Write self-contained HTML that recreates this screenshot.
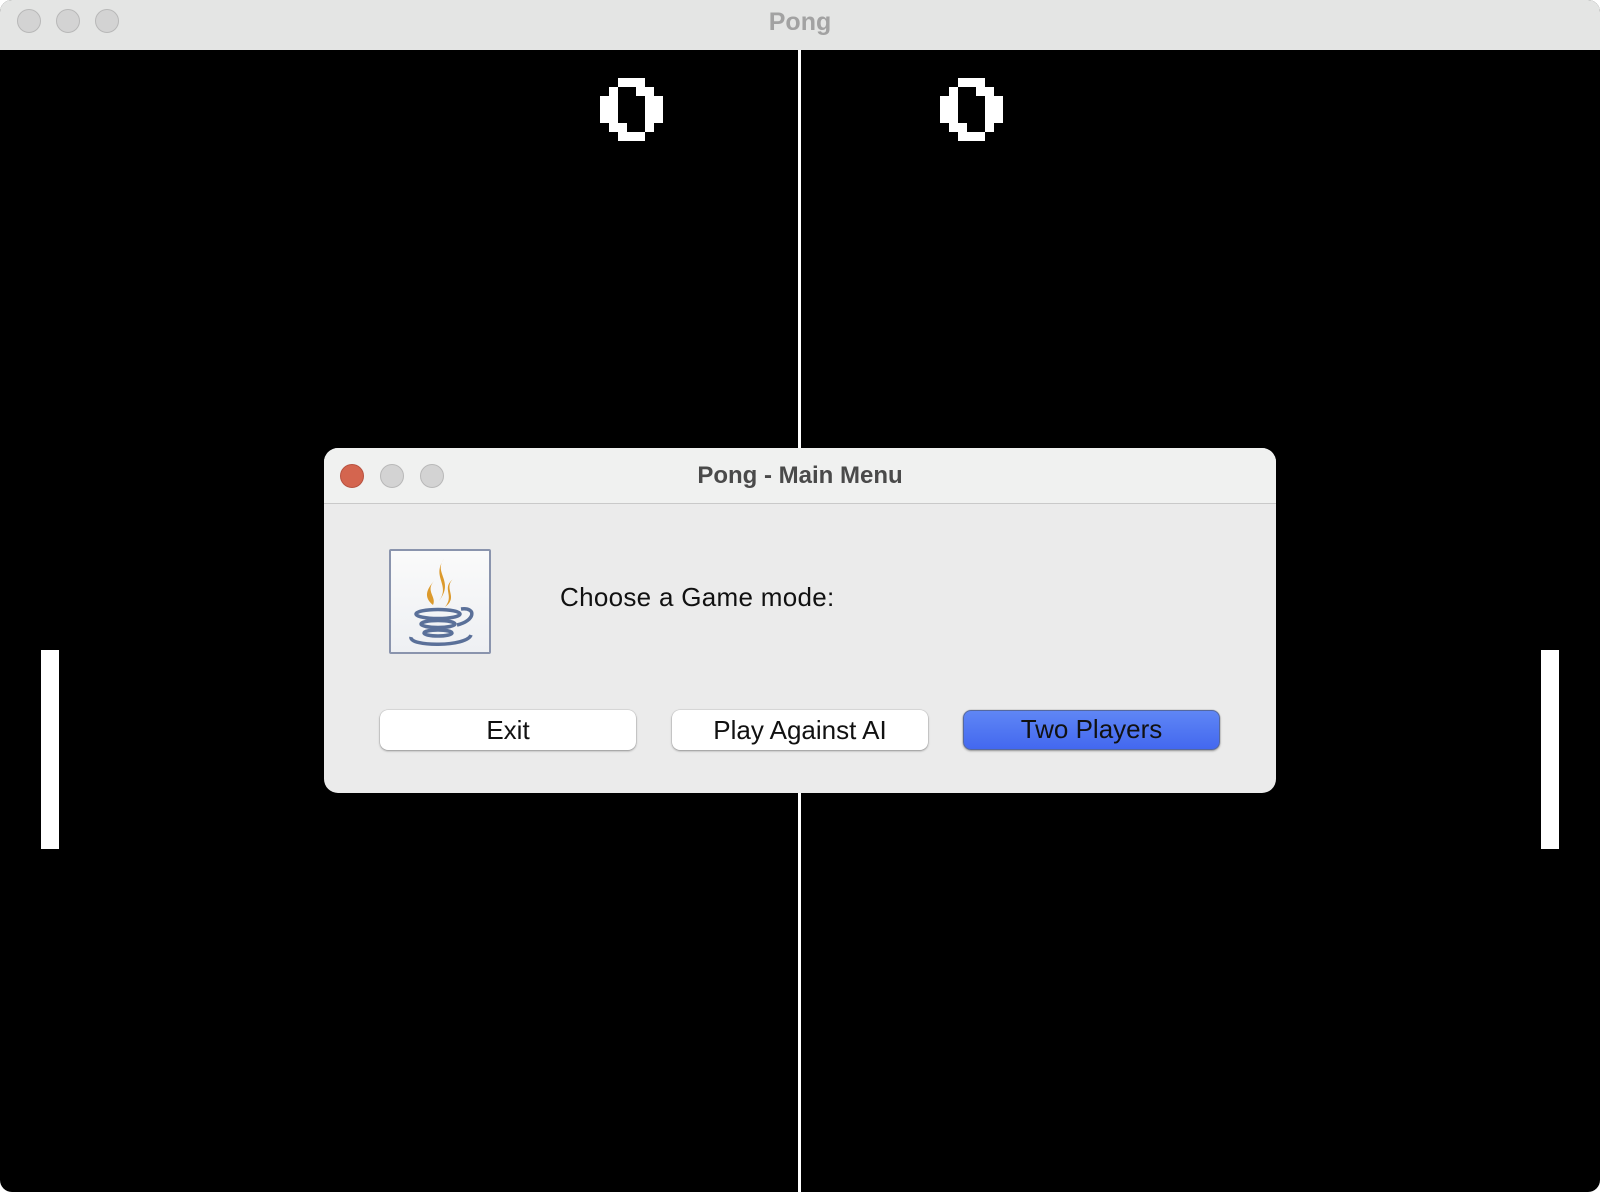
<!DOCTYPE html>
<html><head><style>
*{margin:0;padding:0;box-sizing:border-box}
body{width:1600px;height:1192px;background:#fff;position:relative;overflow:hidden;font-family:"Liberation Sans",sans-serif}
.win{position:absolute;left:0;top:0;width:1600px;height:1192px;border-radius:12px;overflow:hidden;background:#000}
.tb{position:absolute;left:0;top:0;width:1600px;height:50px;background:#e4e5e4}
.dot{position:absolute;width:24px;height:24px;border-radius:50%;background:#d3d3d3;border:1px solid #b8b8b8}
.ttl{position:absolute;left:0;width:1600px;top:8px;text-align:center;font-weight:bold;font-size:25px;color:#a2a2a2}
.b{position:absolute;background:#fff}
.dlg{position:absolute;left:324px;top:448px;width:952px;height:345px;border-radius:14px;background:#ebebeb;overflow:hidden}
.dtb{position:absolute;left:0;top:0;width:952px;height:56px;background:#f0f1f0;border-bottom:1px solid #c9c9c9}
.btn{position:absolute;top:710px;width:256px;height:40px;border-radius:8px;background:#fff;box-shadow:0 1px 2px rgba(0,0,0,.35),0 0 0 .5px rgba(0,0,0,.12);text-align:center;font-size:26px;line-height:40px;color:#111}
</style></head><body>
<div class="win">
<div class="tb">
<div class="dot" style="left:17px;top:9px"></div>
<div class="dot" style="left:56px;top:9px"></div>
<div class="dot" style="left:95px;top:9px"></div>
<div class="ttl">Pong</div>
</div>
<div class="b" style="left:798px;top:50px;width:3px;height:1142px"></div>
<div class="b" style="left:41px;top:650px;width:18px;height:199px"></div>
<div class="b" style="left:1541px;top:650px;width:18px;height:199px"></div>
<div style="position:absolute;left:600px;top:78px">
<div class="b" style="left:18px;top:0;width:27px;height:9px"></div>
<div class="b" style="left:9px;top:9px;width:9px;height:9px"></div>
<div class="b" style="left:36px;top:9px;width:18px;height:9px"></div>
<div class="b" style="left:0;top:18px;width:18px;height:27px"></div>
<div class="b" style="left:45px;top:18px;width:18px;height:27px"></div>
<div class="b" style="left:9px;top:45px;width:18px;height:9px"></div>
<div class="b" style="left:45px;top:45px;width:9px;height:9px"></div>
<div class="b" style="left:18px;top:54px;width:27px;height:9px"></div>
</div>
<div style="position:absolute;left:940px;top:78px">
<div class="b" style="left:18px;top:0;width:27px;height:9px"></div>
<div class="b" style="left:9px;top:9px;width:9px;height:9px"></div>
<div class="b" style="left:36px;top:9px;width:18px;height:9px"></div>
<div class="b" style="left:0;top:18px;width:18px;height:27px"></div>
<div class="b" style="left:45px;top:18px;width:18px;height:27px"></div>
<div class="b" style="left:9px;top:45px;width:18px;height:9px"></div>
<div class="b" style="left:45px;top:45px;width:9px;height:9px"></div>
<div class="b" style="left:18px;top:54px;width:27px;height:9px"></div>
</div>
</div>
<div class="dlg">
<div class="dtb">
<div class="dot" style="left:16px;top:16px;background:#d4654f;border-color:#b85240"></div>
<div class="dot" style="left:56px;top:16px"></div>
<div class="dot" style="left:96px;top:16px"></div>
<div style="position:absolute;left:0;width:952px;top:14px;text-align:center;font-weight:bold;font-size:24px;color:#4a4a4a">Pong - Main Menu</div>
</div>
<div style="position:absolute;left:65px;top:101px;width:102px;height:105px;border:2px solid #8a94ad;border-radius:2px;background:linear-gradient(#fafafa,#eef0f3)">
<svg width="98" height="101" viewBox="0 0 98 101">
<path d="M53 8 C42 22 64 30 48 50 C60 34 40 26 53 8Z" fill="#dc9a2c"/>
<path d="M62 28 C50 38 64 44 54 56 C68 46 52 38 62 28Z" fill="#dc9a2c"/>
<path d="M43 30 C34 40 46 46 42 54 C32 46 36 38 43 30Z" fill="#dc9a2c"/>
<ellipse cx="47" cy="63" rx="22" ry="4.5" fill="none" stroke="#5a7099" stroke-width="3.5"/>
<path d="M70 58 C86 56 84 70 66 74" fill="none" stroke="#5a7099" stroke-width="3.5"/>
<ellipse cx="47" cy="73" rx="17" ry="3.5" fill="none" stroke="#5a7099" stroke-width="3.5"/>
<ellipse cx="47" cy="82" rx="14" ry="3" fill="none" stroke="#5a7099" stroke-width="3.5"/>
<path d="M20 86 C18 96 76 96 80 84" fill="none" stroke="#5a7099" stroke-width="3.5"/>
</svg>
</div>
<div style="position:absolute;left:236px;top:134px;font-size:26px;color:#111;letter-spacing:.3px">Choose a Game mode:</div>
</div>
<div class="btn" style="left:380px">Exit</div>
<div class="btn" style="left:672px">Play Against AI</div>
<div class="btn" style="left:963px;width:257px;background:linear-gradient(#5f86f5,#4368ef);border:1.5px solid #5468a0;line-height:37px">Two Players</div>
</body></html>
